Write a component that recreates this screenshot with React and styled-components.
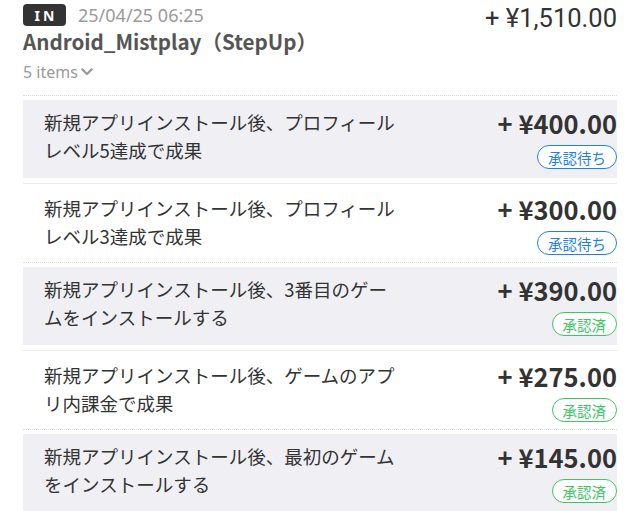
import React from 'react'
import styled, { createGlobalStyle } from 'styled-components'

const GlobalStyle = createGlobalStyle`
  body {
    margin: 0;
    background: #ffffff;
    font-family: 'Noto Sans CJK JP', 'Noto Sans', sans-serif;
    color: #333333;
  }
`

const Page = styled.div`
  padding: 4px 23px 0 23px;
`

const Header = styled.div`
  display: flex;
  justify-content: space-between;
  align-items: flex-start;
  padding-bottom: 12px;
`

const HeaderLeft = styled.div`
  display: flex;
  flex-direction: column;
`

const MetaRow = styled.div`
  display: flex;
  align-items: center;
  gap: 12px;
  height: 22px;
`

const TypeBadge = styled.span`
  display: inline-flex;
  align-items: center;
  justify-content: center;
  width: 43px;
  height: 22px;
  border-radius: 4px;
  background: #333333;
  color: #ffffff;
  font-family: 'Noto Sans', sans-serif;
  font-weight: 700;
  font-size: 14px;
  letter-spacing: 3px;
  text-indent: 3px;
`

const DateText = styled.span`
  font-family: 'Noto Sans', sans-serif;
  font-size: 18px;
  color: #9a9a9a;
`

const Title = styled.div`
  margin-top: 0;
  font-size: 20.6px;
  font-weight: 700;
  color: #555555;
  line-height: 30px;
`

const ItemsToggle = styled.div`
  display: flex;
  align-items: center;
  gap: 1px;
  margin-top: 5px;
  font-family: 'Noto Sans', sans-serif;
  font-size: 16px;
  color: #9a9a9a;
  line-height: 22px;
`

const TotalAmount = styled.div`
  font-family: Roboto, 'Noto Sans', sans-serif;
  font-size: 25.5px;
  color: #333333;
  line-height: 28px;
`

const List = styled.div`
  display: flex;
  flex-direction: column;
`

const Item = styled.div`
  border-top: 1px ${p => (p.$shaded ? 'dotted #dcdcdc' : 'solid #ececec')};
  padding: ${p => (p.$shaded ? '4px 0 5px' : '0')};
`

const ItemBody = styled.div`
  display: flex;
  justify-content: space-between;
  align-items: flex-start;
  height: 78px;
  box-sizing: border-box;
  padding: ${p => (p.$shaded ? '8px' : '10px')} 0 0 21px;
  background: ${p => (p.$shaded ? '#efeff4' : '#ffffff')};
`

const ItemText = styled.div`
  width: 355px;
  font-size: 18.5px;
  line-height: 28px;
  color: #333333;
`

const ItemSide = styled.div`
  display: flex;
  flex-direction: column;
  align-items: flex-end;
`

const ItemAmount = styled.div`
  font-family: 'Noto Sans CJK JP', 'Noto Sans', sans-serif;
  font-weight: 700;
  font-size: 25.5px;
  line-height: 30px;
  color: #333333;
`

const Status = styled.span`
  margin-top: 7px;
  display: inline-flex;
  align-items: center;
  height: 24px;
  box-sizing: border-box;
  padding: 0 10px;
  border-radius: 12px;
  border: 1px solid ${p => (p.$done ? '#3cc765' : '#1f7ff0')};
  color: ${p => (p.$done ? '#3cc765' : '#1f7ff0')};
  font-size: 14.5px;
  background: #ffffff;
`

const items = [
  { text: '新規アプリインストール後、プロフィールレベル5達成で成果', amount: '+ ¥400.00', done: false },
  { text: '新規アプリインストール後、プロフィールレベル3達成で成果', amount: '+ ¥300.00', done: false },
  { text: '新規アプリインストール後、3番目のゲームをインストールする', amount: '+ ¥390.00', done: true },
  { text: '新規アプリインストール後、ゲームのアプリ内課金で成果', amount: '+ ¥275.00', done: true },
  { text: '新規アプリインストール後、最初のゲームをインストールする', amount: '+ ¥145.00', done: true },
]

const Chevron = () => (
  <svg width="16" height="16" viewBox="0 0 24 24" fill="none" stroke="#9a9a9a" strokeWidth="3.4" strokeLinecap="round" strokeLinejoin="round">
    <path d="M5 8l7 7 7-7" />
  </svg>
)

export default function App() {
  return (
    <>
      <GlobalStyle />
      <Page>
        <Header>
          <HeaderLeft>
            <MetaRow>
              <TypeBadge>IN</TypeBadge>
              <DateText>25/04/25 06:25</DateText>
            </MetaRow>
            <Title>Android_Mistplay（StepUp）</Title>
            <ItemsToggle>
              5 items <Chevron />
            </ItemsToggle>
          </HeaderLeft>
          <TotalAmount>+ ¥1,510.00</TotalAmount>
        </Header>
        <List>
          {items.map((item, i) => {
            const shaded = i % 2 === 0
            return (
              <Item key={i} $shaded={shaded}>
                <ItemBody $shaded={shaded}>
                  <ItemText>{item.text}</ItemText>
                  <ItemSide>
                    <ItemAmount>{item.amount}</ItemAmount>
                    <Status $done={item.done}>{item.done ? '承認済' : '承認待ち'}</Status>
                  </ItemSide>
                </ItemBody>
              </Item>
            )
          })}
        </List>
      </Page>
    </>
  )
}
